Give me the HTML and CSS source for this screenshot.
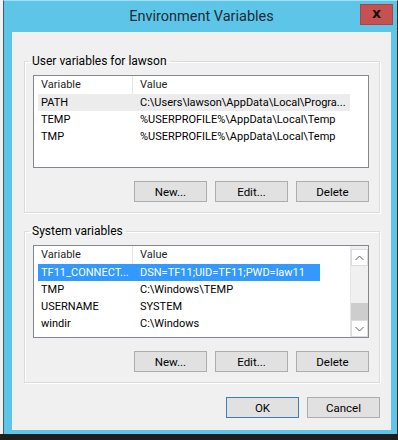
FILE: index.html
```html
<!DOCTYPE html>
<html lang="en">
<head>
    <meta charset="UTF-8">
    <title>Environment Variables</title>
    <link rel="stylesheet" href="styles.css">
</head>
<body>
    <div class="window">
        <div class="titlebar">
            <span></span>
            <span class="title">Environment Variables</span>
            <button class="close">x</button>
        </div>

        <div class="client">
            <fieldset class="group">
                <legend>User variables for lawson</legend>
                <div class="list">
                    <div class="rows user-rows">
                        <div class="row head"><span>Variable</span><span>Value</span></div>
                        <div class="row dim"><span>PATH</span><span>C:\Users\lawson\AppData\Local\Progra...</span></div>
                        <div class="row"><span>TEMP</span><span>%USERPROFILE%\AppData\Local\Temp</span></div>
                        <div class="row"><span>TMP</span><span>%USERPROFILE%\AppData\Local\Temp</span></div>
                    </div>
                </div>
                <div class="btns">
                    <button class="btn">New...</button>
                    <button class="btn">Edit...</button>
                    <button class="btn">Delete</button>
                </div>
            </fieldset>

            <fieldset class="group">
                <legend>System variables</legend>
                <div class="list">
                    <div class="rows sys-rows">
                        <div class="row head"><span>Variable</span><span>Value</span></div>
                        <div class="row selected"><span>TF11_CONNECT...</span><span>DSN=TF11;UID=TF11;PWD=law11</span></div>
                        <div class="row"><span>TMP</span><span>C:\Windows\TEMP</span></div>
                        <div class="row"><span>USERNAME</span><span>SYSTEM</span></div>
                        <div class="row"><span>windir</span><span>C:\Windows</span></div>
                    </div>
                    <div class="scrollbar">
                        <div class="arrow">
                            <svg width="9" height="6" viewBox="0 0 9 6"><path d="M0.5 5 L4.5 1 L8.5 5" fill="none" stroke="#606060" stroke-width="1"/></svg>
                        </div>
                        <div class="track"></div>
                        <div class="thumb"></div>
                        <div class="arrow">
                            <svg width="9" height="6" viewBox="0 0 9 6"><path d="M0.5 1 L4.5 5 L8.5 1" fill="none" stroke="#606060" stroke-width="1"/></svg>
                        </div>
                    </div>
                </div>
                <div class="btns">
                    <button class="btn">New...</button>
                    <button class="btn">Edit...</button>
                    <button class="btn">Delete</button>
                </div>
            </fieldset>

            <div class="btns dialog-btns">
                <button class="btn default">OK</button>
                <button class="btn">Cancel</button>
            </div>
        </div>
    </div>
</body>
</html>
```

FILE: styles.css
```css
body {
    margin: 0;
    font-family: Roboto, "Liberation Sans", sans-serif;
    font-size: 11px;
    color: #000;
    background: linear-gradient(to bottom, #f2f2f2 0, #f2f2f2 434px, #1e1e1e 434px);
    height: 440px;
    overflow: hidden;
}
.window {
    box-sizing: border-box;
    width: 395px;
    margin-left: 3px;
    background: #5dc6e8;
    border-left: 1px solid #36606e;
    border-right: 1px solid #2c2c2c;
    border-top: 1px solid #a9dcee;
    padding: 0 6px 4px 8px;
}
.titlebar {
    display: grid;
    grid-template-columns: 1fr auto 1fr;
    align-items: start;
    height: 31px;
}
.title {
    font-size: 14.5px;
    line-height: 31px;
    color: #1d2b38;
}
.close {
    justify-self: end;
    width: 33px;
    height: 21px;
    margin: 3px -2px 0 0;
    padding: 0 0 3px;
    background: #c75050;
    border: 1px solid #a84545;
    color: #111;
    font: bold 14px "DejaVu Sans", sans-serif;
    line-height: 14px;
}
.client {
    background: #f0f0f0;
    height: 398px;
    box-sizing: border-box;
    padding: 21px 11px 0 12px;
}
.group {
    margin: 0 0 10px;
    padding: 6px 10px 10px 8px;
    border: 1px solid #dcdcdc;
    box-shadow: inset 1px 1px 0 #fff, 1px 1px 0 #fff;
}
.group legend {
    margin-left: -4px;
    padding: 0 3px;
    font-size: 12px;
    line-height: 16px;
    color: #000;
}
.list {
    display: flex;
    height: 93px;
    box-sizing: border-box;
    border: 1px solid #828790;
    background: #fff;
}
.rows {
    flex: 1;
    padding-left: 4px;
}
.row {
    display: grid;
    width: max-content;
    grid-template-columns: 95px 217px;
    height: 17px;
    line-height: 17px;
    white-space: nowrap;
}
.sys-rows .row {
    grid-template-columns: 95px 187px;
}
.row span {
    padding-left: 3px;
    overflow: hidden;
}
.row span + span {
    padding-left: 7px;
}
.row.head {
    height: 18px;
    line-height: 18px;
    color: #1f1f1f;
}
.row.head span {
    border-right: 1px solid #e5e5e5;
}
.row.head span + span {
    border-right: none;
}
.row.dim {
    background: #ececec;
}
.row.selected {
    background: #3399ff;
    color: #fff;
}
.scrollbar {
    width: 17px;
    display: flex;
    flex-direction: column;
    background: #f0f0f0;
    border-left: 1px solid #e6e6e6;
    padding-top: 3px;
}
.arrow {
    height: 15px;
    display: flex;
    align-items: center;
    justify-content: center;
    background: #fff;
    border: 1px solid #dcdcdc;
}
.track {
    flex: 1;
}
.thumb {
    height: 17px;
    background: #cdcdcd;
}
.btns {
    display: flex;
    justify-content: flex-end;
    gap: 8px;
    margin-top: 13px;
}
.btn {
    width: 73px;
    height: 21px;
    padding: 0;
    background: #e1e1e1;
    border: 1px solid #adadad;
    font-family: Roboto, "Liberation Sans", sans-serif;
    font-size: 11.5px;
    color: #000;
}
.btn.default {
    border-color: #3c7fb1;
}
.dialog-btns {
    margin-top: 14px;
}
```
